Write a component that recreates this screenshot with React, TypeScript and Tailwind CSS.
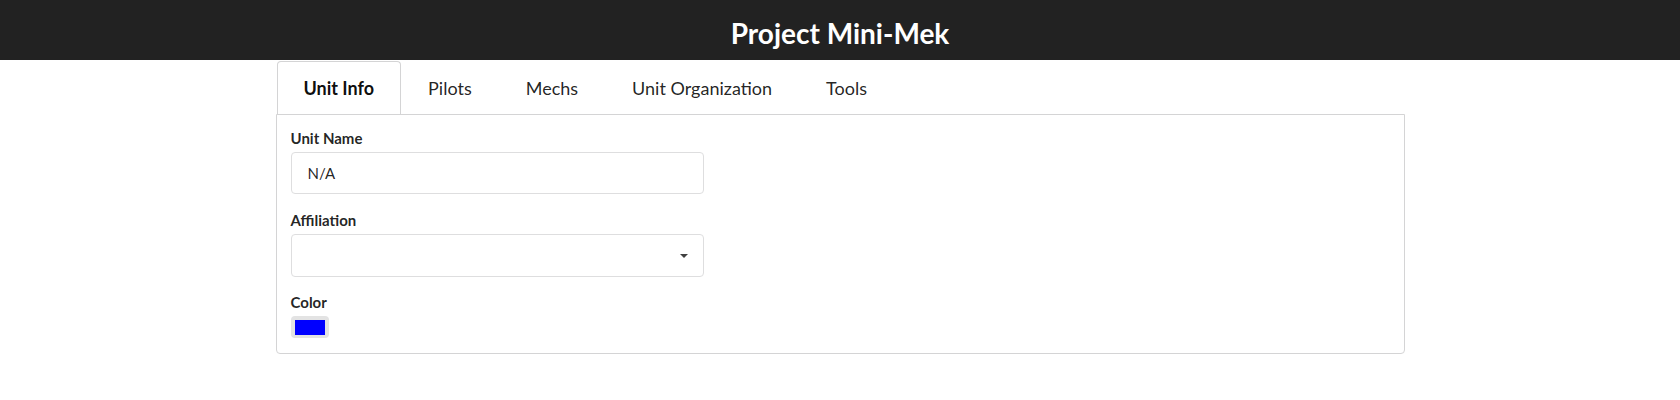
import React from "react";

const tabs = ["Unit Info", "Pilots", "Mechs", "Unit Organization", "Tools"];

const Field: React.FC<{ label: string; children: React.ReactNode }> = ({ label, children }) => {
  return (
    <div className="flex flex-col">
      <label className="text-[15px] leading-[19px] font-bold text-[rgba(0,0,0,0.87)]">{label}</label>
      <div className="mt-[4px]">{children}</div>
    </div>
  );
};

const App: React.FC = () => {
  return (
    <div className="min-h-[400px] bg-white font-[Lato,sans-serif]">
      <div className="h-[60px] bg-[#222222] pt-[19px] text-center">
        <h1 className="text-[28px] leading-[28px] font-bold text-white">Project Mini-Mek</h1>
      </div>

      <div className="w-[1129px] mx-auto">
        <div className="flex pt-px pl-px">
          {tabs.map((tab, i) => (
            <div
              key={tab}
              className={
                i === 0
                  ? "h-[53px] flex items-center px-[26px] border border-b-0 border-[#d4d4d5] rounded-t-[4px] bg-white text-[18px] leading-none font-bold text-[rgba(0,0,0,0.95)]"
                  : "h-[53px] flex items-center px-[26px] border border-b-0 border-transparent text-[18px] leading-none text-[rgba(0,0,0,0.87)]"
              }
            >
              {tab}
            </div>
          ))}
        </div>

        <div className="border border-[#d4d4d5] rounded-b-[4px] px-[14px] pt-[14px] pb-[15px] flex flex-col gap-[17px]">
          <Field label="Unit Name">
            <div className="w-[413px] h-[42px] border border-[#dededf] rounded-[4px] flex items-center pl-[16px] text-[15px] text-[rgba(0,0,0,0.87)]">
              N/A
            </div>
          </Field>
          <Field label="Affiliation">
            <div className="w-[413px] h-[43px] border border-[#dededf] rounded-[4px] flex items-center justify-end pr-[15px]">
              <span className="w-0 h-0 border-x-[4px] border-x-transparent border-t-[4px] border-t-[#404040]" />
            </div>
          </Field>
          <div className="-mt-px">
            <Field label="Color">
              <div className="w-[38px] h-[22px] rounded-[4px] bg-[#e3e3e3] flex items-center justify-center">
                <div className="w-[30px] h-[15px] bg-[#0000ff]" />
              </div>
            </Field>
          </div>
        </div>
      </div>
    </div>
  );
};

export default App;
